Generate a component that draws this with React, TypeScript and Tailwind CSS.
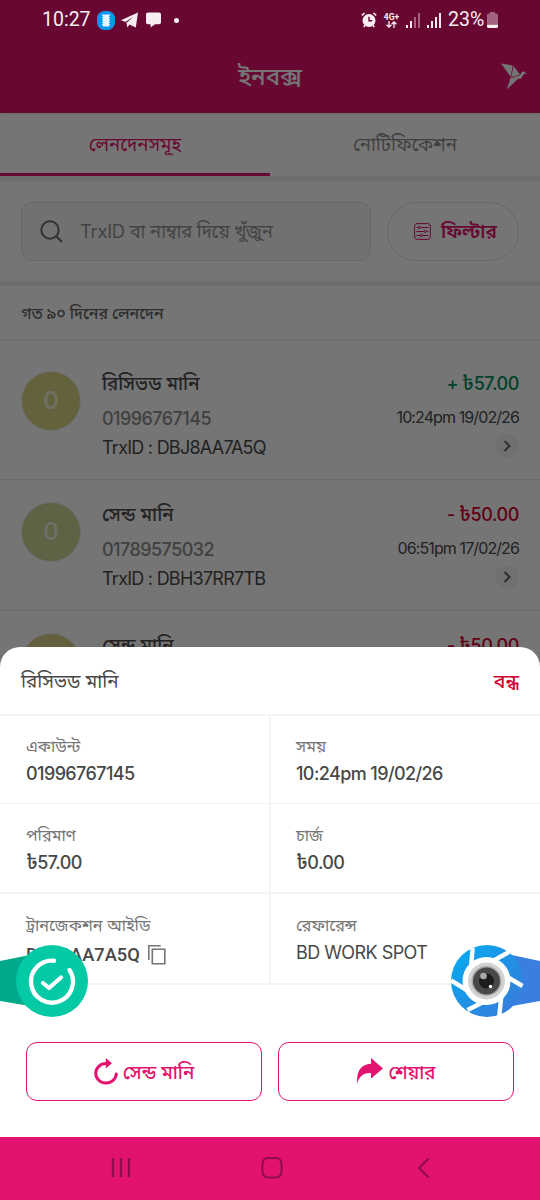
import type { ReactNode } from "react";

type Transaction = {
  title: string;
  account: string;
  trxId: string;
  amount: string;
  time: string;
  received: boolean;
  color: string;
};

const transactions: Transaction[] = [
  {
    title: "রিসিভড মানি",
    account: "01996767145",
    trxId: "DBJ8AA7A5Q",
    amount: "57.00",
    time: "10:24pm 19/02/26",
    received: true,
    color: "bg-[#d9d485]",
  },
  {
    title: "সেন্ড মানি",
    account: "01789575032",
    trxId: "DBH37RR7TB",
    amount: "50.00",
    time: "06:51pm 17/02/26",
    received: false,
    color: "bg-[#ccd898]",
  },
];

function StatusBar() {
  return (
    <div className="absolute inset-x-0 top-0 flex h-10 items-center justify-between pl-[42px] pr-[42px] font-['Roboto',sans-serif] text-[#f7eef2]">
      <div className="flex items-center">
        <span className="w-[49px] text-[19.5px] leading-10">10:27</span>
        <svg className="ml-1.5 h-[19px] w-[18px]" viewBox="0 0 18 19">
          <rect width="18" height="19" rx="7.5" fill="#0a98ee" />
          <path d="M6 3.500h6v12H6z" fill="#e4f4ff" />
          <path d="M5.500 3.500v12M12.500 3.500v12" stroke="#e4f4ff" strokeDasharray="1.200 1.200" />
        </svg>
        <svg className="ml-1.5 h-[17px] w-[17px]" viewBox="0 0 17 17" fill="currentColor">
          <path d="M17 .6 14.800 15.600 8.400 12.600l-2 3-1-4.700 7-6.200-8 5.200L0 8.200z" />
        </svg>
        <svg className="ml-2 h-4 w-[15px]" viewBox="0 0 15 16" fill="currentColor">
          <path d="M2 .5h11a2 2 0 0 1 2 2v7.800a2 2 0 0 1-2 2H9L4.600 15.500v-3.200H2a2 2 0 0 1-2-2V2.500a2 2 0 0 1 2-2z" />
        </svg>
        <span className="ml-[13px] h-[5px] w-[5px] rounded-full bg-current" />
      </div>

      <div className="flex items-center">
        <svg className="h-4 w-4" viewBox="0 0 16 16" fill="none">
          <circle cx="8" cy="8.500" r="6.500" fill="currentColor" />
          <path d="M.8 3.400 3.600 1M15.200 3.400 12.400 1M2.600 15l1.600-1.800M13.400 15l-1.600-1.800" stroke="currentColor" strokeWidth="1.600" />
          <path d="M8 4.700v4.100h3.200" stroke="#680932" strokeWidth="1.400" />
        </svg>
        <div className="ml-1.5 flex w-[17px] flex-col items-center">
          <span className="text-[8.500px] font-bold leading-[8px]">4G+</span>
          <svg className="h-[7px] w-[11px]" viewBox="0 0 11 7" fill="none" stroke="currentColor" strokeWidth="1.300">
            <path d="M3 0v6M.6 3.700 3 6.200l2.400-2.500M8 7V1M5.600 3.300 8 .8l2.400 2.500" />
          </svg>
        </div>
        <svg className="ml-1.5 h-[15px] w-[14px]" viewBox="0 0 14 15" fill="currentColor">
          <path d="M0 12h2v3H0zM4 8h2v7H4z" />
          <path d="M8 4h2v11H8zM12 0h2v15h-2z" opacity=".4" />
        </svg>
        <svg className="ml-[7px] h-[15px] w-[14px]" viewBox="0 0 14 15" fill="currentColor">
          <path d="M0 12h2v3H0zM4 8h2v7H4zM8 4h2v11H8zM12 0h2v15h-2z" />
        </svg>
        <span className="ml-[7px] w-[36px] text-[19.5px] leading-10">23%</span>
        <svg className="ml-[3px] h-4 w-[11px]" viewBox="0 0 11 16" fill="currentColor">
          <path d="M3 0h5v1.500h1.500A1.500 1.500 0 0 1 11 3v9H0V3a1.500 1.500 0 0 1 1.500-1.500H3z" opacity=".4" />
          <path d="M0 12.500h11V14.500a1.500 1.500 0 0 1-1.500 1.500h-8A1.500 1.500 0 0 1 0 14.500z" />
        </svg>
      </div>
    </div>
  );
}

function Taka({ sign, value }: { sign?: string; value: string }) {
  return (
    <span>
      {sign && <span className="mr-1">{sign}</span>}
      <span className="text-[20px] leading-none">৳</span>
      {value}
    </span>
  );
}

function TransactionRow({ item }: { item: Transaction }) {
  return (
    <div className="flex h-[131px] border-b border-[#eaeaea] px-[21px] pt-[21px]">
      <div
        className={`mt-[1px] flex h-[60px] w-[60px] shrink-0 items-center justify-center rounded-full border border-[#efefef] text-2xl font-medium text-white/75 ${item.color}`}
      >
        0
      </div>
      <div className="ml-[21px] flex-1 text-lg">
        <div className="h-[27px] text-[18.7px] font-medium leading-[27px] text-[#4a4a4a]">{item.title}</div>
        <div className="mt-[8px] h-[28px] font-medium leading-[27px] tracking-[-0.55px] text-[#8d8d8d]">{item.account}</div>
        <div className="h-[30px] leading-[30px] tracking-[-0.75px] text-[#4a4a4a]">TrxID : {item.trxId}</div>
      </div>
      <div className="flex flex-col items-end">
        <div
          className={`h-[27px] text-lg font-medium leading-[27px] tracking-[-0.4px] ${item.received ? "text-[#009161]" : "text-[#d6002f]"}`}
        >
          <Taka sign={item.received ? "+" : "-"} value={item.amount} />
        </div>
        <div className="mt-[7px] h-[26px] text-base leading-[26px] tracking-[-0.9px] text-[#4a4a4a]">{item.time}</div>
        <div className="mt-[4px] flex h-6 w-6 items-center justify-center rounded-full bg-[#f3f3f3]">
          <svg className="h-3 w-2" viewBox="0 0 8 12" fill="none" stroke="#666" strokeWidth="2">
            <path d="m1.500 1 5 5-5 5" />
          </svg>
        </div>
      </div>
    </div>
  );
}

// Only the top edge of the next row shows above the sheet
function PartialRow() {
  return (
    <div className="flex h-[37px] items-start overflow-hidden px-[21px] pt-[21px]">
      <div className="mt-[1px] h-[60px] w-[60px] shrink-0 rounded-full border border-[#efefef] bg-[#d9cf85]" />
      <div className="ml-[21px] flex-1 text-[18.7px] font-medium leading-[27px] text-[#4a4a4a]">সেন্ড মানি</div>
      <div className="text-lg font-medium leading-[27px] tracking-[-0.4px] text-[#d6002f]">
        <Taka sign="-" value="50.00" />
      </div>
    </div>
  );
}

function Detail({ label, right, children }: { label: string; right?: boolean; children: ReactNode }) {
  return (
    <div className={`h-full pl-[26px] pt-[17px] ${right ? "" : "-mr-px border-r-2 border-[#f5f5f5]"}`}>
      <div className="h-[26px] text-[16.2px] leading-[26px] text-[#757575]">{label}</div>
      <div className="flex h-[30px] items-center text-lg font-medium leading-[30px] tracking-[-0.6px] text-[#484848]">
        {children}
      </div>
    </div>
  );
}

function Inbox() {
  return (
    <div className="flex flex-col">
      <header className="grid h-[113px] grid-cols-[1fr_auto_1fr] items-center bg-[#e2136e] pt-10 shadow-sm">
        <span />
        <h1 className="text-[24px] font-medium leading-8 text-white">ইনবক্স</h1>
        <svg className="mr-[13px] h-[27px] w-[27px] justify-self-end" viewBox="0 0 27 27" fill="#fff">
          <path d="M1 .5 12.700 2.500 10.700 13.700z" />
          <path d="m13.500 3 6.500 8.500-8.700 2.500z" />
          <path d="m10.700 14.600 8 .700L6.700 26.500z" />
          <path d="m12.200 14.200 7.800-2 1.800-3.400 2.200-.4 2.700 2.500-2.700.2-3.500 5z" />
        </svg>
      </header>

      <div className="grid h-[68px] grid-cols-2 border-b-[5px] border-[#efefef] text-center text-[18.6px] leading-[63px]">
        <div className="h-[63px] border-b-[3px] border-[#e2136e] text-[#e2136e]">লেনদেনসমূহ</div>
        <div className="text-[#8d8d8d]">নোটিফিকেশন</div>
      </div>

      <div className="flex h-[105px] items-start gap-4 border-b-[5px] border-[#efefef] px-[21px] pt-[21px]">
        <div className="flex h-[59px] w-[350px] items-center rounded-[11px] border-[1.5px] border-[#dedede] bg-[#f7f7f7] pl-[18px]">
          <svg className="h-6 w-6" viewBox="0 0 24 24" fill="none" stroke="#6b6b6b" strokeWidth="2">
            <circle cx="10" cy="10" r="8.700" />
            <path d="m16.200 16.200 5.800 5.800" />
          </svg>
          <span className="ml-4 text-[18.4px] tracking-[-0.3px] text-[#939393]">TrxID বা নাম্বার দিয়ে খুঁজুন</span>
        </div>
        <div className="flex h-[59px] w-[132px] items-center rounded-full border-[1.5px] border-[#dedede] pl-[26px]">
          <svg className="h-[17px] w-[17px]" viewBox="0 0 17 17" fill="none" stroke="#e2136e" strokeWidth="1">
            <rect x=".6" y=".6" width="15.800" height="15.800" rx="2.500" />
            <path d="M2.500 4.500h1.500M6.500 4.500h8M2.500 8.500h7.500M12.500 8.500h2M2.500 12.500H6M8.500 12.500h6" />
            <circle cx="5.200" cy="4.500" r="1.100" />
            <circle cx="11.300" cy="8.500" r="1.100" />
            <circle cx="7.200" cy="12.500" r="1.100" />
          </svg>
          <span className="ml-2.5 pt-0.5 text-[19px] font-semibold text-[#e2136e]">ফিল্টার</span>
        </div>
      </div>

      <div className="h-[55px] border-b-2 border-[#efefef] pl-[21px] text-[15.8px] font-medium leading-[55px] text-[#666]">
        গত ৯০ দিনের লেনদেন
      </div>

      <div className="pt-2">
        {transactions.map((item) => (
          <TransactionRow key={item.trxId} item={item} />
        ))}
        <PartialRow />
      </div>
    </div>
  );
}

function DetailSheet() {
  return (
    <section className="absolute inset-x-0 bottom-[63px] flex h-[490px] flex-col rounded-t-[20px] bg-white">
      <div className="flex h-[69px] items-center justify-between border-b-2 border-[#f5f5f5] px-[21px] pt-[3px] text-[18.8px]">
        <h2 className="text-[#484848]">রিসিভড মানি</h2>
        <button className="text-[19.5px] font-medium text-[#d6002f]">বন্ধ</button>
      </div>
      <div className="grid h-[88px] grid-cols-2 border-b border-[#f3f3f3]">
        <Detail label="একাউন্ট">01996767145</Detail>
        <Detail label="সময়" right>10:24pm 19/02/26</Detail>
      </div>
      <div className="grid h-[90px] grid-cols-2 border-b-2 border-[#f5f5f5] *:pt-[18px]">
        <Detail label="পরিমাণ">
          <Taka value="57.00" />
        </Detail>
        <Detail label="চার্জ" right>
          <Taka value="0.00" />
        </Detail>
      </div>
      <div className="grid h-[91px] grid-cols-2 border-b-2 border-[#f5f5f5] *:pt-[18px]">
        <Detail label="ট্রানজেকশন আইডি">
          <span className="mt-[3px] font-['Roboto',sans-serif] text-[18.3px] tracking-normal">DBJ8AA7A5Q</span>
          <svg className="ml-2 mt-[3px] h-5 w-[18px]" viewBox="0 0 18 20" fill="none" stroke="#757575" strokeWidth="1.600">
            <path d="M.8 15V.8h12" />
            <path d="M4.300 4.300h12.500v14.400H4.300z" />
          </svg>
        </Detail>
        <Detail label="রেফারেন্স" right>
          <span className="font-normal tracking-[-0.55px]">BD WORK SPOT</span>
        </Detail>
      </div>
      <div className="mt-[57px] flex gap-4 px-[26px] text-[18.7px] text-[#e2136e]">
        <button className="flex h-[59px] flex-1 items-center justify-center gap-[5px] rounded-[11px] border-[1.5px] border-[#e2136e]">
          <svg className="h-[27px] w-[24px]" viewBox="0 0 24 27" fill="none">
            <path d="M22.300 16A10.300 9.800 0 1 1 12 5.500" stroke="#e2136e" strokeWidth="3" strokeLinecap="round" />
            <path d="M11.800 0v10.500l6.200-5.200z" fill="#e2136e" />
          </svg>
          <span className="pt-[3px] font-medium">সেন্ড মানি</span>
        </button>
        <button className="flex h-[59px] flex-1 items-center justify-center gap-1.5 rounded-[11px] border-[1.5px] border-[#e2136e]">
          <svg className="h-[27px] w-[26px]" viewBox="0 0 26 27" fill="#e2136e">
            <path d="M14 0 26 10.500 14 20.500v-5.300C7 14.500 2 18 .3 26-1 13.500 4 6.200 14 5.800z" />
          </svg>
          <span className="pt-[3px] font-medium">শেয়ার</span>
        </button>
      </div>
    </section>
  );
}

function FloatingHandles() {
  return (
    <>
      <svg className="absolute left-0 top-[945px] h-[73px] w-[88px]" viewBox="0 0 88 73">
        <path d="M0 16 30 10v51L0 56z" fill="#00a98a" />
        <circle cx="52" cy="36" r="36" fill="#03c9a5" />
        <path d="M54 15.700A21 21 0 1 0 69.500 25" fill="none" stroke="#fff" strokeWidth="4.400" strokeLinecap="round" />
        <path d="m43 38 6 5 12-10.500" fill="none" stroke="#fff" strokeWidth="4.200" strokeLinecap="round" strokeLinejoin="round" />
      </svg>
      <svg className="absolute left-[451px] top-[945px] h-[73px] w-[89px]" viewBox="0 0 89 73">
        <defs>
          <linearGradient id="shutter" x1="0" y1="0" x2="1" y2="1">
            <stop offset="0" stopColor="#02adf2" />
            <stop offset="1" stopColor="#3d77d8" />
          </linearGradient>
        </defs>
        <path d="M56 9 89 16v40l-33 6z" fill="#387fdf" />
        <circle cx="36" cy="36" r="36" fill="url(#shutter)" />
        <path d="M21.700 3 20 22M58 7 33 21M71.500 41 48 27M48.300 71l2.200-22M16.500 65l24-12M0 35.500 22 49" stroke="#fff" strokeWidth="4.400" />
        <circle cx="35.500" cy="36" r="24" fill="#fff" />
        <circle cx="35.500" cy="36" r="18.500" fill="#d2d2d2" />
        <circle cx="35.500" cy="36" r="15" fill="#a9a9a9" />
        <circle cx="35.500" cy="36" r="13.500" fill="#484848" />
        <circle cx="35.500" cy="36" r="7.500" fill="#1d1d1d" />
        <circle cx="32.500" cy="31" r="3.300" fill="#aaa" />
        <circle cx="39.500" cy="41.500" r="1.700" fill="#fff" />
      </svg>
    </>
  );
}

function NavigationBar() {
  return (
    <nav className="absolute inset-x-0 bottom-0 flex h-[63px] items-center bg-[#e2136e]">
      <svg className="ml-[110px] h-6 w-[22px]" viewBox="0 0 22 24" stroke="#8c0d47" strokeWidth="2.200">
        <path d="M3 1v19M11 1v19M19 1v19" />
      </svg>
      <svg className="ml-[129px] h-6 w-6" viewBox="0 0 24 24" fill="none" stroke="#8c0d47" strokeWidth="2">
        <rect x="1.500" y="1" width="19" height="19.500" rx="5.500" />
      </svg>
      <svg className="ml-[130px] h-6 w-4" viewBox="0 0 16 24" fill="none" stroke="#8c0d47" strokeWidth="2">
        <path d="M13.500 1.500 4 11l9.500 9.500" />
      </svg>
    </nav>
  );
}

export default function App() {
  return (
    <div className="relative h-[1200px] w-[540px] overflow-hidden bg-white font-['Inter','Noto_Sans_Bengali','Noto_Sans',sans-serif]">
      <Inbox />
      <div className="absolute inset-0 bg-black/54" />
      <StatusBar />
      <DetailSheet />
      <FloatingHandles />
      <NavigationBar />
    </div>
  );
}
